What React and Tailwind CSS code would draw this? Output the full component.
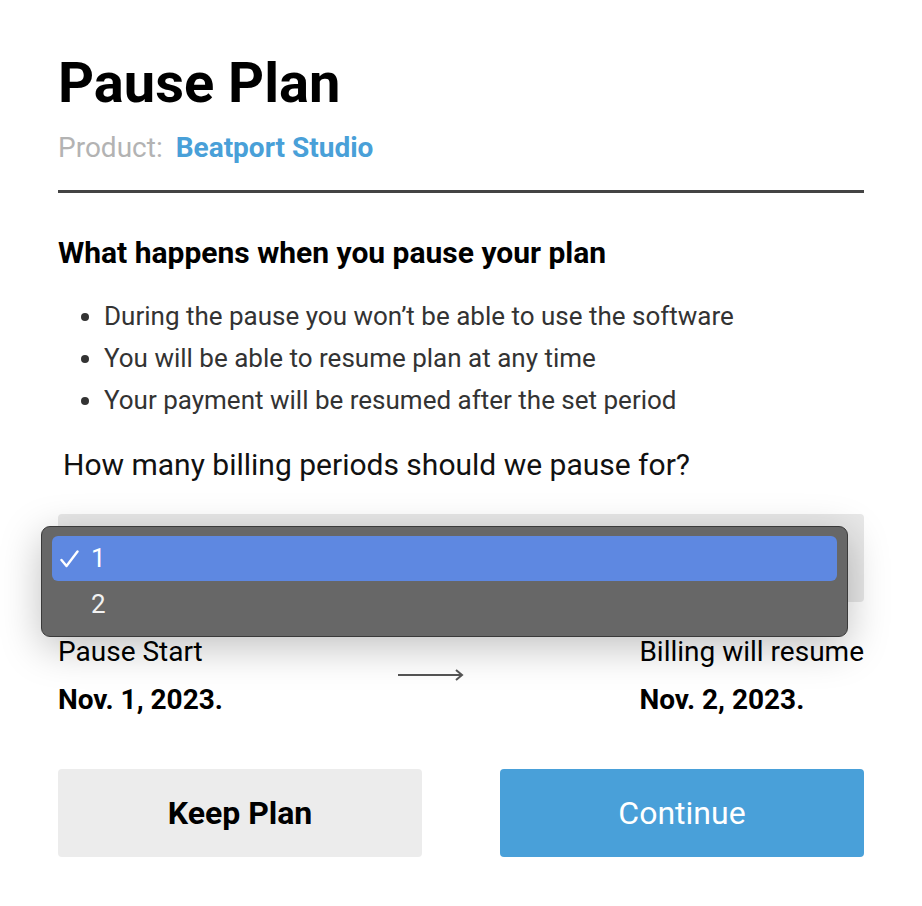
import React from 'react';

const font = { fontFamily: 'Roboto, "Noto Sans", sans-serif' };

const bullets = [
  'During the pause you won\u2019t be able to use the software',
  'You will be able to resume plan at any time',
  'Your payment will be resumed after the set period',
];

const PausePlan = () => {
  return (
    <div className="min-h-screen bg-white px-[58px] pt-[50px] pb-[49px]" style={font}>
      <h1 className="text-[56px] leading-[66px] font-bold text-black">Pause Plan</h1>

      <div className="mt-[17px] flex items-baseline text-[28px] leading-[30px]">
        <span className="text-[#b3b3b3]">Product:</span>
        <span className="ml-[13px] font-bold text-[#49a0d8]">Beatport Studio</span>
      </div>

      <div className="mt-[27px] h-[3px] bg-[#444444]"></div>

      <h2 className="mt-[45px] text-[30px] leading-[30px] font-bold text-black">
        What happens when you pause your plan
      </h2>

      <ul className="mt-[27px] list-disc pl-[46px] text-[26px] leading-[42px] text-[#333333]">
        {bullets.map((b) => (
          <li key={b}>{b}</li>
        ))}
      </ul>

      <p className="mt-[29px] pl-[5px] text-[30px] leading-[30px] text-[#111111]">
        How many billing periods should we pause for?
      </p>

      {/* select + open native popup */}
      <div className="relative mt-[34px] h-[88px]">
        <div className="h-full rounded-[4px] bg-[#e8e8e8]"></div>
        <div className="absolute left-[-17px] top-[12px] w-[807px] h-[111px] rounded-[9px] border border-[#3a3a3a] bg-[#676767] px-[10px] py-[9px] shadow-[0_10px_40px_rgba(0,0,0,0.25)]">
          <div className="flex h-[45px] items-center rounded-[6px] bg-[#5e88e1] text-[26px] text-white">
            <span className="flex w-[39px] pl-[8px]">
              <svg width="19" height="18" viewBox="0 0 19 18">
                <path d="M1.5 10 L6.5 16 L17.5 1.5" fill="none" stroke="#ffffff" strokeWidth="2.4" strokeLinecap="round" strokeLinejoin="round" />
              </svg>
            </span>
            <span>1</span>
          </div>
          <div className="flex h-[47px] items-center text-[26px] text-[#f2f2f2]">
            <span className="w-[39px]"></span>
            <span>2</span>
          </div>
        </div>
      </div>

      <div className="mt-[34px] flex items-center justify-between text-[28px] text-black">
        <div>
          <div className="leading-[32px]">Pause Start</div>
          <div className="mt-[16px] leading-[32px] font-bold">Nov. 1, 2023.</div>
        </div>
        <svg width="66" height="12" viewBox="0 0 66 12" className="mt-[-2px]">
          <path d="M0 6 H64 M58 1 L64 6 L58 11" fill="none" stroke="#555555" strokeWidth="2" />
        </svg>
        <div>
          <div className="leading-[32px]">Billing will resume</div>
          <div className="mt-[16px] leading-[32px] font-bold">Nov. 2, 2023.</div>
        </div>
      </div>

      <div className="mt-[53px] grid grid-cols-2 gap-[78px]">
        <button className="h-[88px] rounded-[4px] bg-[#ececec] text-[32px] font-bold text-black">
          Keep Plan
        </button>
        <button className="h-[88px] rounded-[4px] bg-[#49a0d9] text-[32px] text-white">
          Continue
        </button>
      </div>
    </div>
  );
};

export default function App() {
  return <PausePlan />;
}
